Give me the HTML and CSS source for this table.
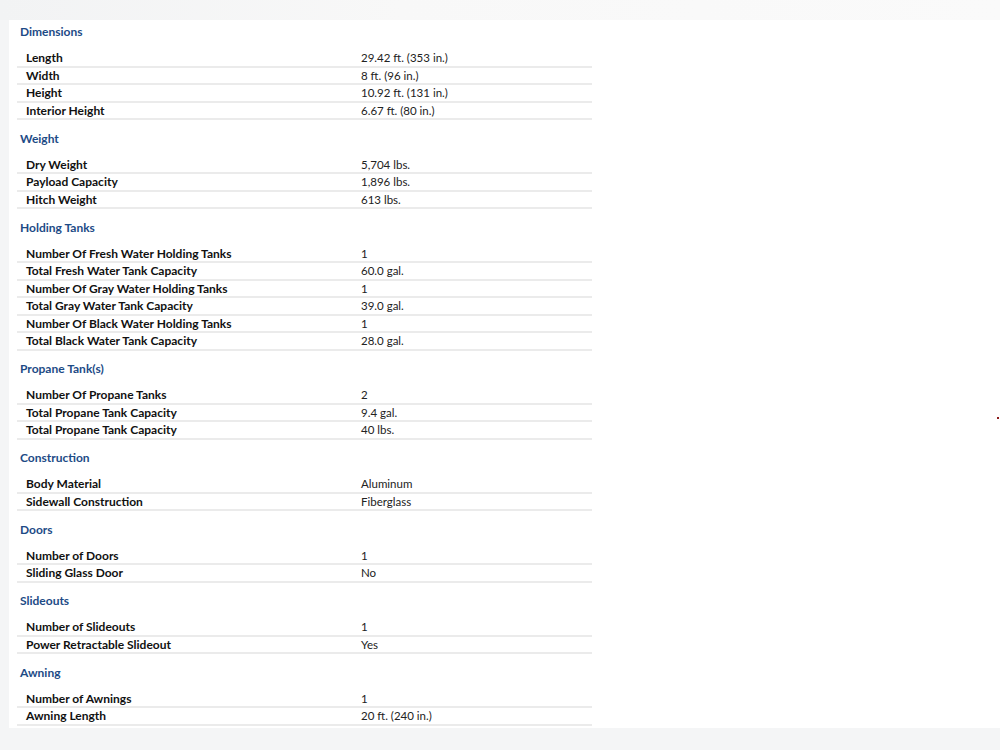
FILE: index.html
```html
<!DOCTYPE html>
<html>
<head>
<meta charset="utf-8">
<link rel="stylesheet" href="styles.css">
</head>
<body>
<div class="topband"></div>
<div class="main">
  <div class="panel">
    <section class="spec">
      <h3 class="spec-title">Dimensions</h3>
      <table class="spec-table">
        <tr><td class="lbl">Length</td><td class="val">29.42 ft. (353 in.)</td></tr>
        <tr><td class="lbl">Width</td><td class="val">8 ft. (96 in.)</td></tr>
        <tr><td class="lbl">Height</td><td class="val">10.92 ft. (131 in.)</td></tr>
        <tr><td class="lbl">Interior Height</td><td class="val">6.67 ft. (80 in.)</td></tr>
      </table>
    </section>
    <section class="spec">
      <h3 class="spec-title">Weight</h3>
      <table class="spec-table">
        <tr><td class="lbl">Dry Weight</td><td class="val">5,704 lbs.</td></tr>
        <tr><td class="lbl">Payload Capacity</td><td class="val">1,896 lbs.</td></tr>
        <tr><td class="lbl">Hitch Weight</td><td class="val">613 lbs.</td></tr>
      </table>
    </section>
    <section class="spec">
      <h3 class="spec-title">Holding Tanks</h3>
      <table class="spec-table">
        <tr><td class="lbl">Number Of Fresh Water Holding Tanks</td><td class="val">1</td></tr>
        <tr><td class="lbl">Total Fresh Water Tank Capacity</td><td class="val">60.0 gal.</td></tr>
        <tr><td class="lbl">Number Of Gray Water Holding Tanks</td><td class="val">1</td></tr>
        <tr><td class="lbl">Total Gray Water Tank Capacity</td><td class="val">39.0 gal.</td></tr>
        <tr><td class="lbl">Number Of Black Water Holding Tanks</td><td class="val">1</td></tr>
        <tr><td class="lbl">Total Black Water Tank Capacity</td><td class="val">28.0 gal.</td></tr>
      </table>
    </section>
    <section class="spec">
      <h3 class="spec-title">Propane Tank(s)</h3>
      <table class="spec-table">
        <tr><td class="lbl">Number Of Propane Tanks</td><td class="val">2</td></tr>
        <tr><td class="lbl">Total Propane Tank Capacity</td><td class="val">9.4 gal.</td></tr>
        <tr><td class="lbl">Total Propane Tank Capacity</td><td class="val">40 lbs.</td></tr>
      </table>
    </section>
    <section class="spec">
      <h3 class="spec-title">Construction</h3>
      <table class="spec-table">
        <tr><td class="lbl">Body Material</td><td class="val">Aluminum</td></tr>
        <tr><td class="lbl">Sidewall Construction</td><td class="val">Fiberglass</td></tr>
      </table>
    </section>
    <section class="spec">
      <h3 class="spec-title">Doors</h3>
      <table class="spec-table">
        <tr><td class="lbl">Number of Doors</td><td class="val">1</td></tr>
        <tr><td class="lbl">Sliding Glass Door</td><td class="val">No</td></tr>
      </table>
    </section>
    <section class="spec">
      <h3 class="spec-title">Slideouts</h3>
      <table class="spec-table">
        <tr><td class="lbl">Number of Slideouts</td><td class="val">1</td></tr>
        <tr><td class="lbl">Power Retractable Slideout</td><td class="val">Yes</td></tr>
      </table>
    </section>
    <section class="spec">
      <h3 class="spec-title">Awning</h3>
      <table class="spec-table">
        <tr><td class="lbl">Number of Awnings</td><td class="val">1</td></tr>
        <tr><td class="lbl">Awning Length</td><td class="val">20 ft. (240 in.)</td></tr>
      </table>
    </section>
    <span class="dot"></span>
  </div>
</div>
</body>
</html>
```

FILE: styles.css
```css
html, body {
  margin: 0;
  padding: 0;
}
body {
  width: 1000px;
  height: 750px;
  overflow: hidden;
  background: #f4f5f6;
  font-family: Lato, "Noto Sans", sans-serif;
}
.topband {
  height: 20px;
  background: linear-gradient(90deg, #f2f3f4 0%, #f8f8f8 40%, #fafafa 100%);
}
.main {
  padding-left: 9px;
}
.panel {
  position: relative;
  background: #ffffff;
  height: 708px;
  padding: 2px 0 0 8px;
  box-sizing: border-box;
}
.spec-title {
  margin: 0 0 8px 0;
  height: 20px;
  line-height: 20px;
  padding-left: 3px;
  font-size: 12px;
  font-weight: 700;
  color: #1d4b86;
}
.spec-table {
  width: 575px;
  border-collapse: collapse;
  margin-bottom: 8.5px;
}
.spec-table td {
  height: 15.5px;
  padding: 0 0 0 9px;
  border-bottom: 2px solid #ebebeb;
  font-size: 12px;
  line-height: 15.5px;
  white-space: nowrap;
}
.spec-table td.lbl {
  width: 326px;
  font-weight: 700;
  color: #111111;
}
.spec-table td.val {
  font-size: 11.5px;
  color: #222222;
}
.dot {
  position: absolute;
  left: 988px;
  top: 397px;
  width: 2px;
  height: 2px;
  background: #8b1a1a;
}
```
